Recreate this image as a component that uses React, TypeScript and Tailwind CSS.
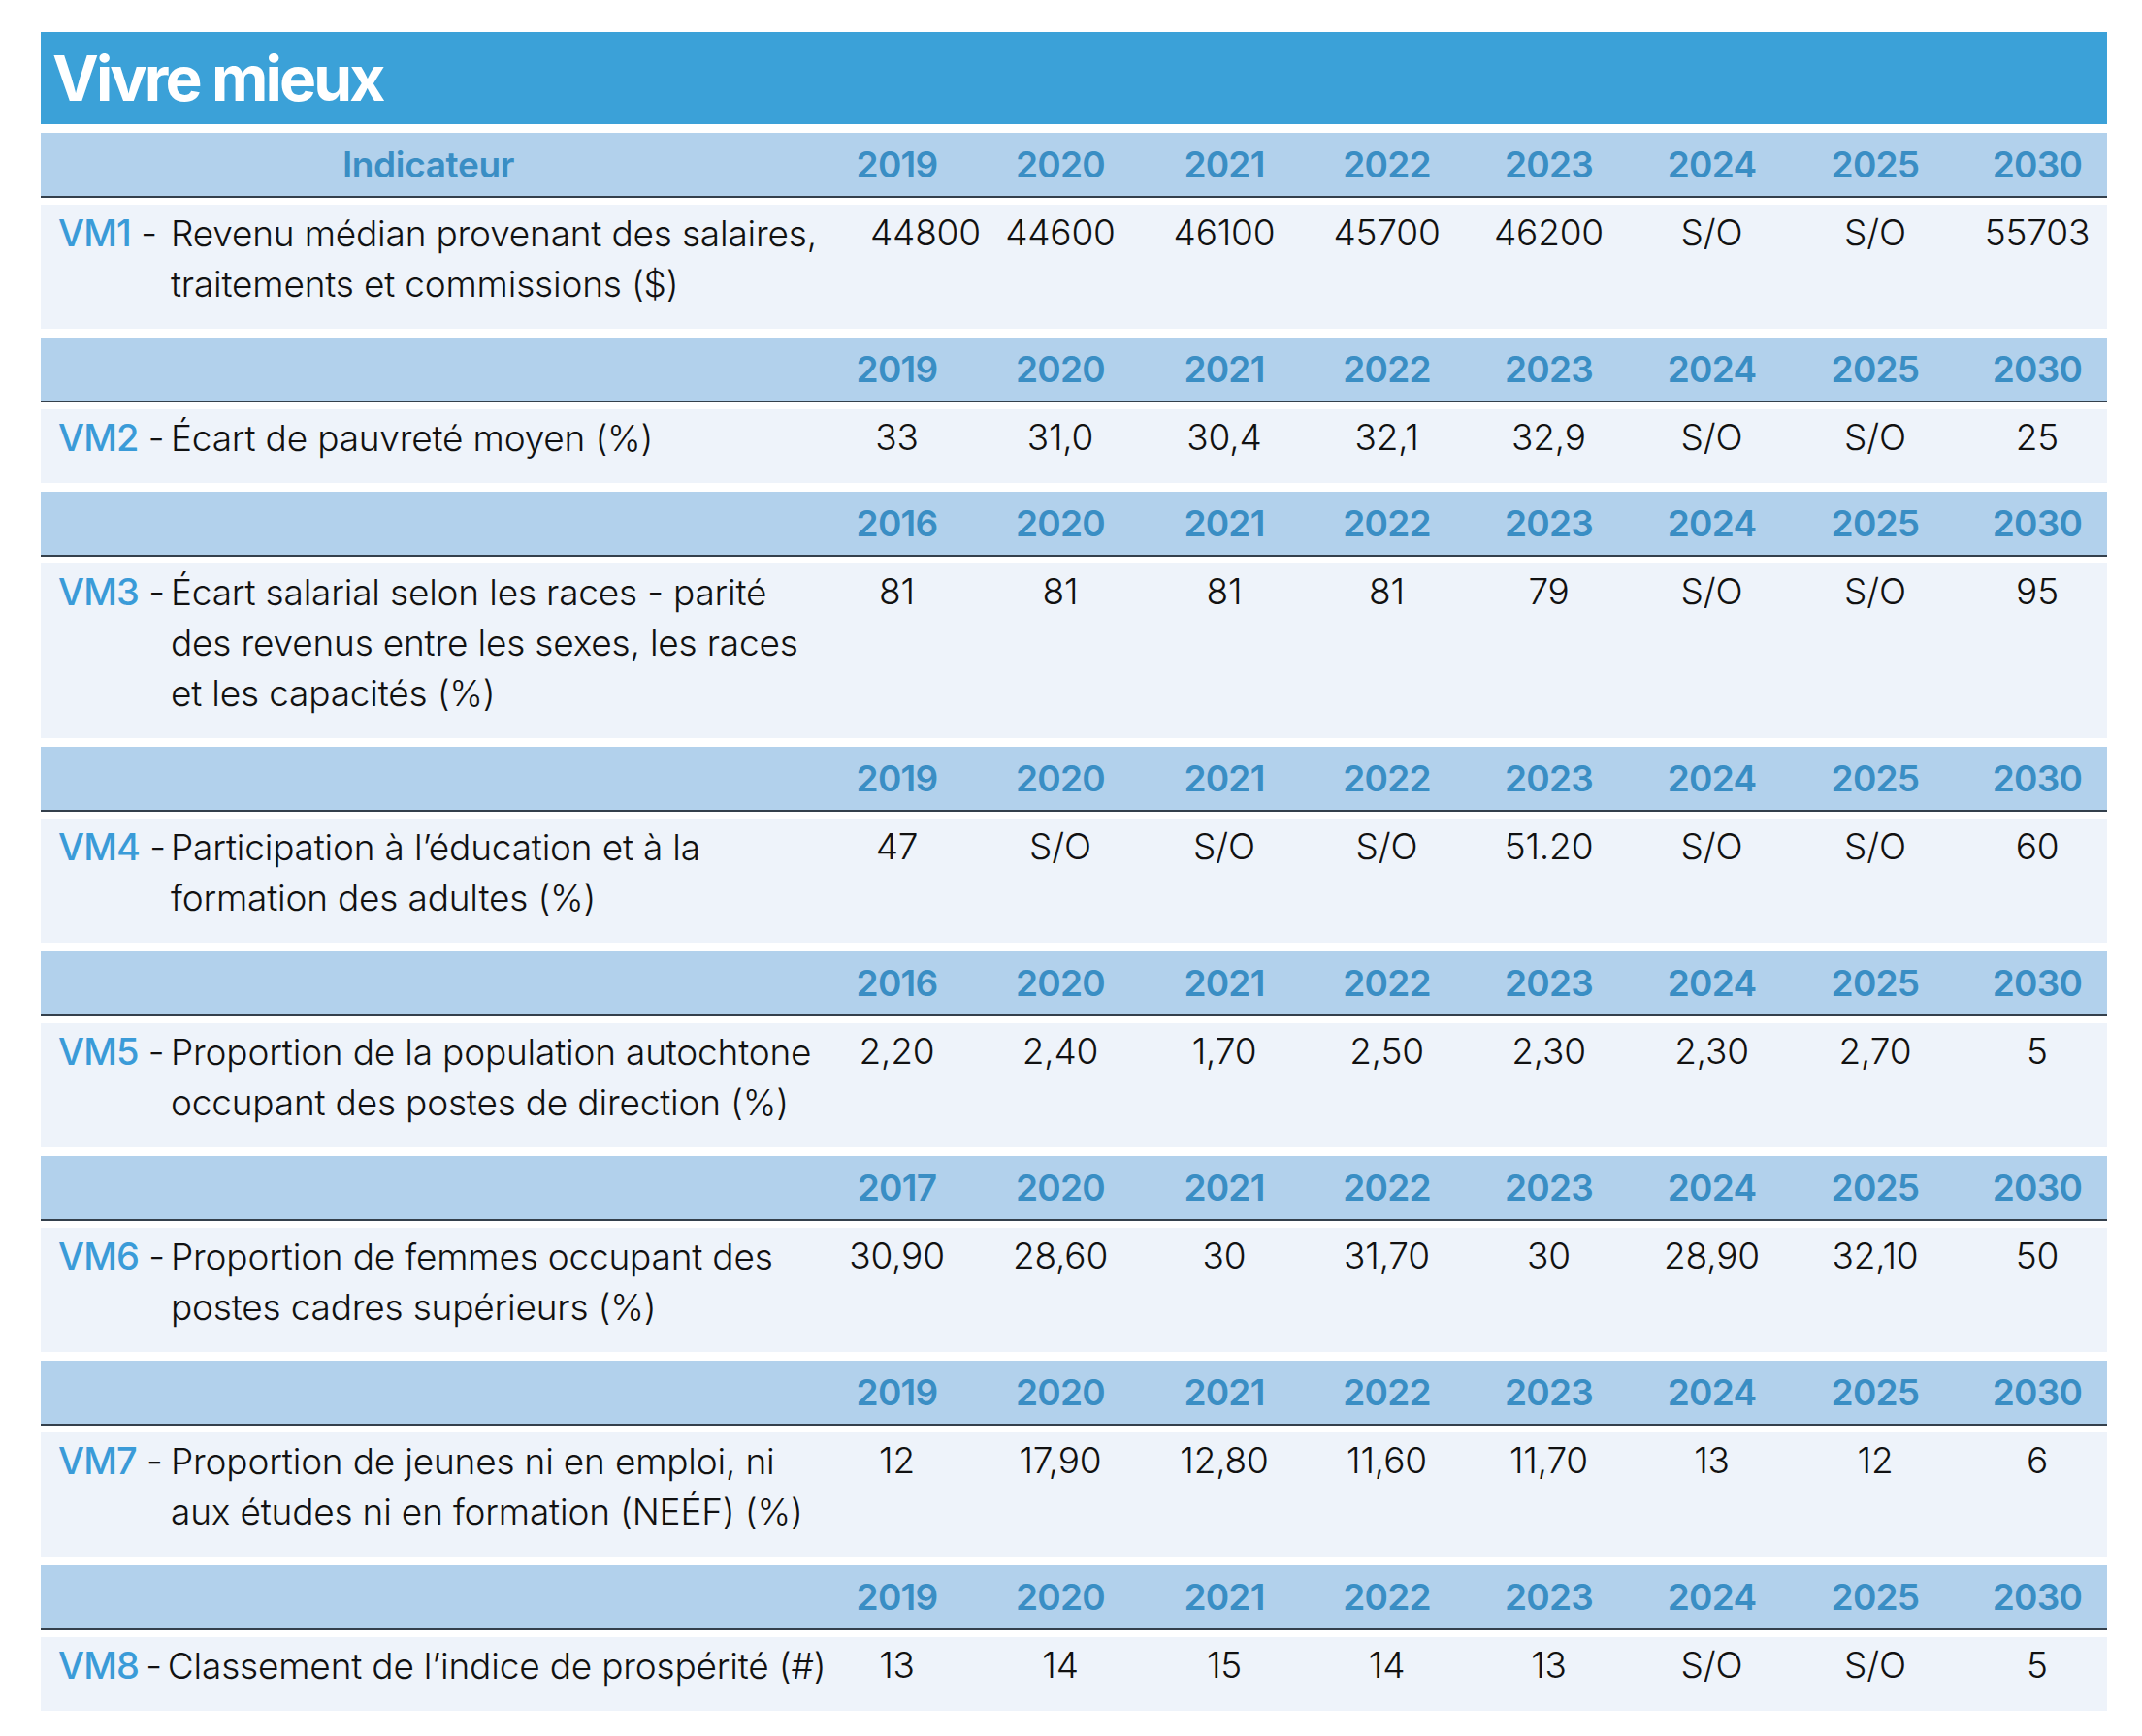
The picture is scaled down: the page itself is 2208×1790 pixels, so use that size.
import { Fragment } from 'react'

type Indicator = {
  code: string
  lines: string[]
  years: string[]
  values: string[]
  tight?: boolean
}

const indicators: Indicator[] = [
  {
    code: 'VM1',
    lines: ['Revenu médian provenant des salaires,', 'traitements et commissions ($)'],
    years: ['2019', '2020', '2021', '2022', '2023', '2024', '2025', '2030'],
    values: ['44800', '44600', '46100', '45700', '46200', 'S/O', 'S/O', '55703'],
  },
  {
    code: 'VM2',
    lines: ['Écart de pauvreté moyen (%)'],
    years: ['2019', '2020', '2021', '2022', '2023', '2024', '2025', '2030'],
    values: ['33', '31,0', '30,4', '32,1', '32,9', 'S/O', 'S/O', '25'],
  },
  {
    code: 'VM3',
    lines: [
      'Écart salarial selon les races - parité',
      'des revenus entre les sexes, les races',
      'et les capacités (%)',
    ],
    years: ['2016', '2020', '2021', '2022', '2023', '2024', '2025', '2030'],
    values: ['81', '81', '81', '81', '79', 'S/O', 'S/O', '95'],
  },
  {
    code: 'VM4',
    lines: ['Participation à l’éducation et à la', 'formation des adultes (%)'],
    years: ['2019', '2020', '2021', '2022', '2023', '2024', '2025', '2030'],
    values: ['47', 'S/O', 'S/O', 'S/O', '51.20', 'S/O', 'S/O', '60'],
  },
  {
    code: 'VM5',
    lines: ['Proportion de la population autochtone', 'occupant des postes de direction (%)'],
    years: ['2016', '2020', '2021', '2022', '2023', '2024', '2025', '2030'],
    values: ['2,20', '2,40', '1,70', '2,50', '2,30', '2,30', '2,70', '5'],
  },
  {
    code: 'VM6',
    lines: ['Proportion de femmes occupant des', 'postes cadres supérieurs (%)'],
    years: ['2017', '2020', '2021', '2022', '2023', '2024', '2025', '2030'],
    values: ['30,90', '28,60', '30', '31,70', '30', '28,90', '32,10', '50'],
  },
  {
    code: 'VM7',
    lines: ['Proportion de jeunes ni en emploi, ni', 'aux études ni en formation (NEÉF) (%)'],
    years: ['2019', '2020', '2021', '2022', '2023', '2024', '2025', '2030'],
    values: ['12', '17,90', '12,80', '11,60', '11,70', '13', '12', '6'],
  },
  {
    code: 'VM8',
    lines: ['Classement de l’indice de prospérité (#)'],
    years: ['2019', '2020', '2021', '2022', '2023', '2024', '2025', '2030'],
    values: ['13', '14', '15', '14', '13', 'S/O', 'S/O', '5'],
    tight: true,
  },
]

const cols = 'grid grid-cols-[799px_167px_170px_168px_167px_167px_169px_168px_155px]'

export default function App() {
  return (
    <div className="min-h-screen bg-white pt-[33px] pl-[42px] font-['Inter',sans-serif]">
      <div className="w-[2130px]">
        <div className="flex h-[95px] items-center bg-[#3ba1d8] pl-[12px]">
          <h1 className="text-[64px] font-bold leading-none tracking-[-0.045em] text-white">Vivre mieux</h1>
        </div>

        {indicators.map((ind, i) => (
          <Fragment key={ind.code}>
            <div className={`${cols} mt-[9px] h-[67px] items-center border-b-2 border-[#34404c] bg-[#b2d1ec] text-[37px] font-semibold tracking-[-0.02em] text-[#3a8ec4]`}>
              <div className="text-center tracking-[-0.01em]">{i === 0 ? 'Indicateur' : ''}</div>
              {ind.years.map((y, j) => (
                <div key={j} className={`text-center ${j === 7 ? 'pl-[11px]' : ''}`}>{y}</div>
              ))}
            </div>

            <div className={`${cols} mt-[7px] items-start bg-[#eef3fa] pt-[3px] pb-[20px] text-[37px] font-light leading-[52px] tracking-[-0.005em] text-[#111]`}>
              <div className="flex items-baseline pl-[18px]">
                <div className={`flex shrink-0 items-baseline ${ind.tight ? 'mr-[6px]' : 'w-[116px]'}`}>
                  <span className="text-[38px] font-medium tracking-[-0.02em] text-[#3a9bd8]">{ind.code}</span>
                  <span className={ind.tight ? 'ml-[7px]' : 'ml-[10px]'}>-</span>
                </div>
                <div className="whitespace-nowrap">
                  {ind.lines.map((l, k) => (
                    <div key={k}>{l}</div>
                  ))}
                </div>
              </div>
              {ind.values.map((v, j) => (
                <div
                  key={j}
                  className={`whitespace-nowrap text-center ${i === 0 && j === 0 ? 'pl-[56px]' : ''} ${j === 7 ? 'pl-[11px]' : ''}`}
                >
                  {v}
                </div>
              ))}
            </div>
          </Fragment>
        ))}
      </div>
    </div>
  )
}
